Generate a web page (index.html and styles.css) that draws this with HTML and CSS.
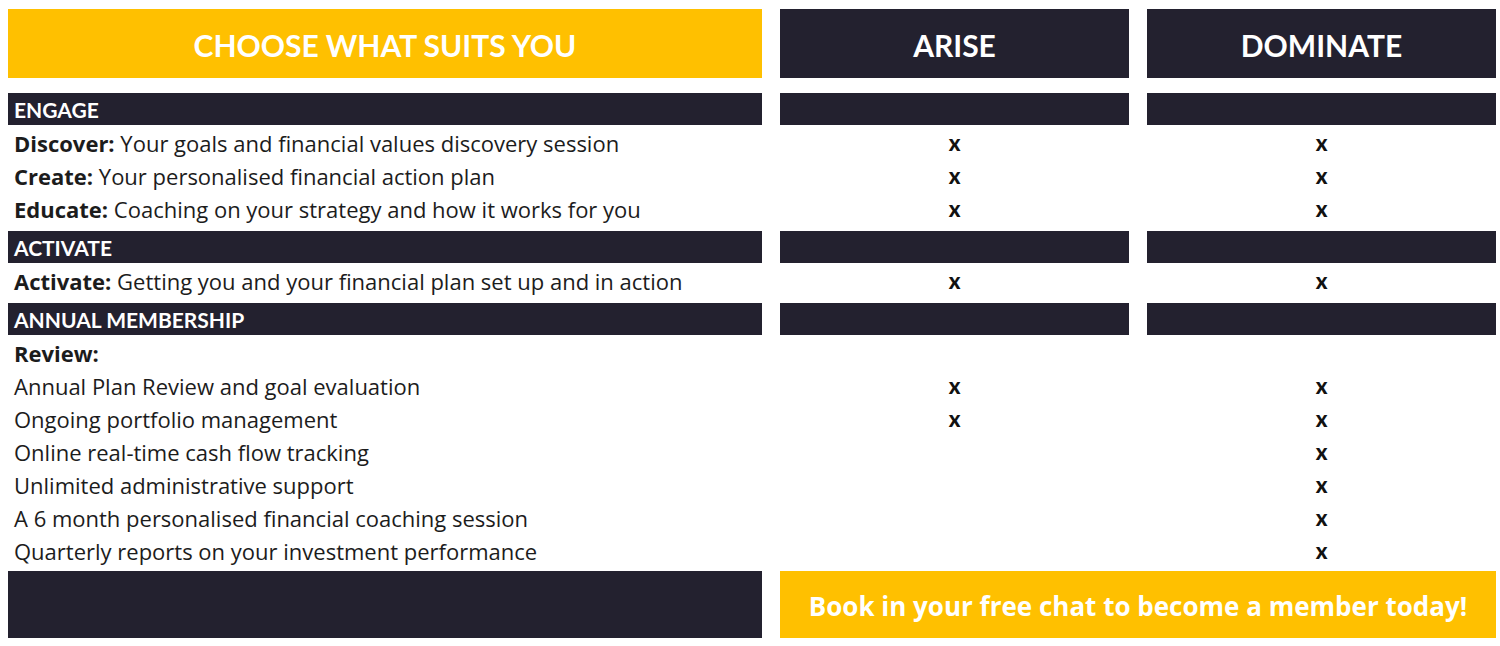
FILE: index.html
```html
<!DOCTYPE html>
<html lang="en">
<head>
<meta charset="utf-8">
<title>Choose what suits you</title>
<link rel="stylesheet" href="styles.css">
</head>
<body>
<div class="table">
  <div class="row head">
    <div class="cell gold title">CHOOSE WHAT SUITS YOU</div>
    <div class="cell dark title">ARISE</div>
    <div class="cell dark title">DOMINATE</div>
  </div>

  <div class="row bar">
    <div class="cell dark sect">ENGAGE</div>
    <div class="cell dark"></div>
    <div class="cell dark"></div>
  </div>
  <div class="row item">
    <div class="label"><b>Discover:</b> Your goals and financial values discovery session</div>
    <div class="cell mark">x</div>
    <div class="cell mark">x</div>
  </div>
  <div class="row item">
    <div class="label"><b>Create:</b> Your personalised financial action plan</div>
    <div class="cell mark">x</div>
    <div class="cell mark">x</div>
  </div>
  <div class="row item">
    <div class="label"><b>Educate:</b> Coaching on your strategy and how it works for you</div>
    <div class="cell mark">x</div>
    <div class="cell mark">x</div>
  </div>

  <div class="row bar gap">
    <div class="cell dark sect">ACTIVATE</div>
    <div class="cell dark"></div>
    <div class="cell dark"></div>
  </div>
  <div class="row item">
    <div class="label"><b>Activate:</b> Getting you and your financial plan set up and in action</div>
    <div class="cell mark">x</div>
    <div class="cell mark">x</div>
  </div>

  <div class="row bar gap">
    <div class="cell dark sect">ANNUAL MEMBERSHIP</div>
    <div class="cell dark"></div>
    <div class="cell dark"></div>
  </div>
  <div class="row item">
    <div class="label"><b>Review:</b></div>
    <div class="cell mark"></div>
    <div class="cell mark"></div>
  </div>
  <div class="row item">
    <div class="label">Annual Plan Review and goal evaluation</div>
    <div class="cell mark">x</div>
    <div class="cell mark">x</div>
  </div>
  <div class="row item">
    <div class="label">Ongoing portfolio management</div>
    <div class="cell mark">x</div>
    <div class="cell mark">x</div>
  </div>
  <div class="row item">
    <div class="label">Online real-time cash flow tracking</div>
    <div class="cell mark"></div>
    <div class="cell mark">x</div>
  </div>
  <div class="row item">
    <div class="label">Unlimited administrative support</div>
    <div class="cell mark"></div>
    <div class="cell mark">x</div>
  </div>
  <div class="row item">
    <div class="label">A 6 month personalised financial coaching session</div>
    <div class="cell mark"></div>
    <div class="cell mark">x</div>
  </div>
  <div class="row item">
    <div class="label">Quarterly reports on your investment performance</div>
    <div class="cell mark"></div>
    <div class="cell mark">x</div>
  </div>

  <div class="row foot">
    <div class="cell dark"></div>
    <div class="cell gold cta">Book in your free chat to become a member today!</div>
  </div>
</div>
</body>
</html>
```
FILE: styles.css
```css
html, body {
  margin: 0;
  padding: 0;
  background: #ffffff;
}

body {
  font-family: Lato, "Open Sans", sans-serif;
  color: #1a1a1a;
}

.table {
  padding: 9px 0 0 8px;
}

.row {
  display: grid;
  grid-template-columns: 754px 349px 349px;
  column-gap: 18px;
}

.cell {
  display: flex;
  align-items: center;
  min-width: 0;
}

.gold {
  background: #ffc000;
  color: #ffffff;
}

.dark {
  background: #23212f;
  color: #ffffff;
}

.head {
  height: 69px;
  margin-bottom: 15px;
}

.title {
  justify-content: center;
  font-weight: 700;
  font-size: 30px;
  padding-top: 3px;
}

.bar {
  height: 32px;
}

.bar.gap {
  margin-top: 7px;
}

.sect {
  padding-left: 6px;
  font-weight: 700;
  font-size: 21px;
}

.item {
  height: 33px;
}

.label {
  padding: 3px 0 0 6px;
  font-family: "Open Sans", sans-serif;
  font-size: 22px;
  line-height: 30px;
  white-space: nowrap;
  color: #1c1c1c;
}

.label b {
  font-weight: 700;
}

.mark {
  justify-content: center;
  font-weight: 900;
  font-size: 22px;
  color: #111111;
  padding-top: 2px;
}

.foot {
  grid-template-columns: 754px 716px;
  height: 67px;
  margin-top: 5px;
}

.cta {
  justify-content: center;
  font-family: "Open Sans", sans-serif;
  font-weight: 700;
  font-size: 26px;
  padding-top: 3px;
}
```
